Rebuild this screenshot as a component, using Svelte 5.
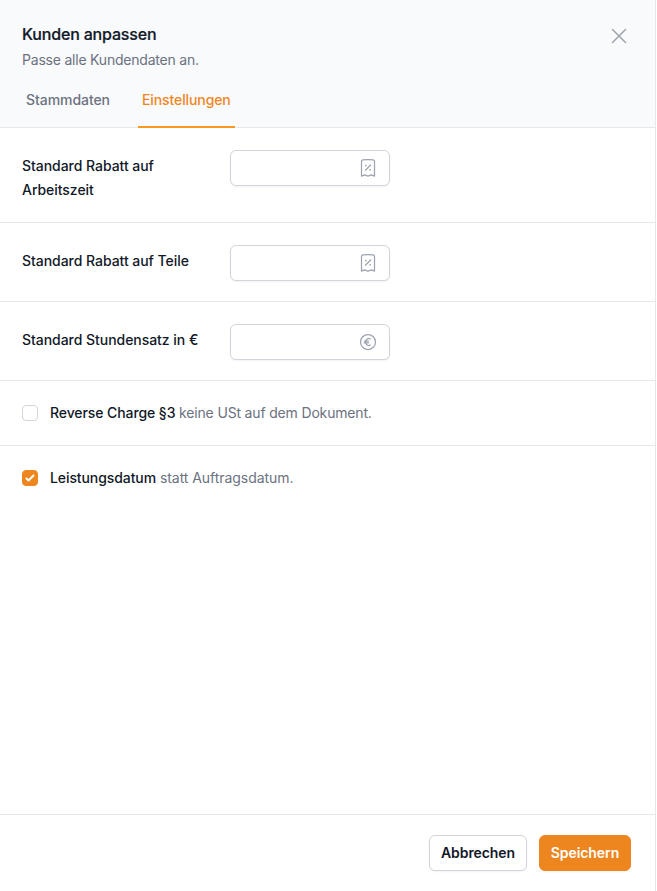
<script>
  const fields = [
    { id: 'labor', label: 'Standard Rabatt auf Arbeitszeit', icon: 'discount' },
    { id: 'parts', label: 'Standard Rabatt auf Teile', icon: 'discount' },
    { id: 'rate', label: 'Standard Stundensatz in €', icon: 'euro' }
  ];
  let values = $state({ labor: '', parts: '', rate: '' });
  let reverseCharge = $state(false);
  let serviceDate = $state(true);
  let tab = $state('Einstellungen');
</script>

<div class="panel">
  <header>
    <div class="top">
      <div>
        <h1>Kunden anpassen</h1>
        <p>Passe alle Kundendaten an.</p>
      </div>
      <button class="close" aria-label="Schließen">
        <svg width="24" height="24" viewBox="0 0 24 24" fill="none" stroke="currentColor" stroke-width="1.5" stroke-linecap="round"><path d="M5.5 5.5l13 13M18.5 5.5l-13 13" /></svg>
      </button>
    </div>
    <nav>
      {#each ['Stammdaten', 'Einstellungen'] as name}
        <button class="tab" class:active={tab === name} onclick={() => (tab = name)}>{name}</button>
      {/each}
    </nav>
  </header>

  <main>
    {#each fields as f}
      <div class="row">
        <label for={f.id}>{f.label}</label>
        <div class="field">
          <input id={f.id} bind:value={values[f.id]} />
          {#if f.icon === 'discount'}
            <svg width="20" height="20" viewBox="0 0 20 20" fill="none" stroke="currentColor" stroke-width="1.25" stroke-linecap="round" stroke-linejoin="round">
              <path d="M3.5 18.1V3.3Q3.5 2.1 4.8 1.9Q10 1.2 15.2 1.9Q16.5 2.1 16.5 3.3V18.1L13.4 16.9L10 18.1L6.6 16.9ZM7.4 12.2L12.6 7" />
              <path stroke-width="1.7" d="M7.8 7.6h.01M12.2 11.8h.01" />
            </svg>
          {:else}
            <svg width="20" height="20" viewBox="0 0 20 20" fill="none" stroke="currentColor" stroke-width="1.25" stroke-linecap="round" stroke-linejoin="round">
              <circle cx="10" cy="10" r="7.5" />
              <path d="M12.2 7C10.2 5.6 7.5 7.2 7.5 10S10.2 14.4 12.2 13M6.2 9.1h4.3M6.2 10.9h4.3" />
            </svg>
          {/if}
        </div>
      </div>
    {/each}

    <label class="check">
      <input type="checkbox" bind:checked={reverseCharge} />
      <span class="tight"><b>Reverse Charge §3</b> keine USt auf dem Dokument.</span>
    </label>
    <label class="check last">
      <input type="checkbox" bind:checked={serviceDate} />
      <span><b>Leistungsdatum</b> statt Auftragsdatum.</span>
    </label>
  </main>

  <footer>
    <button class="btn">Abbrechen</button>
    <button class="btn primary">Speichern</button>
  </footer>
</div>

<style>
  :global(body) { background: #fff; }
  * { box-sizing: border-box; }
  .panel {
    width: 656px;
    height: 891px;
    border-right: 1px solid #e5e7eb;
    display: flex;
    flex-direction: column;
    font: 14px/20px Inter, "Liberation Sans", sans-serif;
    color: #111827;
    background: #fff;
  }
  button { font: inherit; color: inherit; background: none; border: 0; padding: 0; cursor: pointer; }
  header { height: 128px; background: #f9fafc; border-bottom: 1px solid #e5e7eb; padding: 22px 22px 0; }
  .top { display: flex; justify-content: space-between; height: 50px; }
  h1 { margin: 0; font-size: 16px; line-height: 24px; font-weight: 500; letter-spacing: -0.17px; -webkit-text-stroke: 0.2px; }
  p { margin: 4px 0 0; color: #6b7280; letter-spacing: -0.21px; }
  .close { width: 24px; height: 24px; margin: 2px 2px 0 0; color: #9ca3af; }
  svg { display: block; }
  nav { display: flex; gap: 24px; height: 56px; }
  .tab { display: flex; padding: 18px 4px 0; font-weight: 500; color: #6b7280; border-bottom: 2px solid transparent; line-height: 20px; letter-spacing: -0.06px; }
  .tab.active { color: #f0861f; border-color: #f79a1f; letter-spacing: -0.1px; }
  main { flex: 1; }
  .row { display: flex; padding: 22px 22px 20px; border-bottom: 1px solid #e5e7eb; }
  .row label { width: 180px; margin-right: 28px; padding-top: 4px; line-height: 24px; font-weight: 500; letter-spacing: -0.04px; }
  .field { position: relative; width: 160px; height: 36px; }
  .field input { width: 100%; height: 36px; border: 1px solid #d1d5db; border-radius: 6px; padding: 0 44px 0 12px; font: inherit; background: #fff; box-shadow: 0 1px 2px rgba(0, 0, 0, .05); }
  .field svg { position: absolute; right: 12px; top: 8px; color: #9ca3af; }
  .check { display: flex; align-items: center; height: 65px; padding: 0 22px; border-bottom: 1px solid #e5e7eb; color: #6b7280; gap: 12px; letter-spacing: -0.05px; }
  .check.last { border-bottom-color: transparent; }
  .check b { font-weight: 500; color: #111827; letter-spacing: -0.09px; }
  .check .tight { letter-spacing: -0.17px; }
  .check input { appearance: none; width: 16px; height: 16px; margin: 0; border: 1px solid #d1d5db; border-radius: 4px; background: #fff; }
  .check input:checked {
    border-color: #ee861f;
    background: #ee861f url("data:image/svg+xml,%3Csvg viewBox='0 0 16 16' fill='white' xmlns='http://www.w3.org/2000/svg'%3E%3Cpath d='M12.207 4.793a1 1 0 010 1.414l-5 5a1 1 0 01-1.414 0l-2-2a1 1 0 011.414-1.414L6.5 9.086l4.293-4.293a1 1 0 011.414 0z'/%3E%3C/svg%3E") center / 16px 16px no-repeat;
  }
  footer { height: 77px; border-top: 1px solid #e5e7eb; padding: 20px 24px 0; display: flex; justify-content: flex-end; gap: 12px; }
  .btn { width: 98px; height: 36px; border: 1px solid #d1d5db; border-radius: 6px; font-weight: 600; letter-spacing: -0.08px; background: #fff; box-shadow: 0 1px 2px rgba(0, 0, 0, .05); }
  .btn.primary { width: 92px; background: #ee861f; border-color: #ee861f; color: #fff; }
</style>
